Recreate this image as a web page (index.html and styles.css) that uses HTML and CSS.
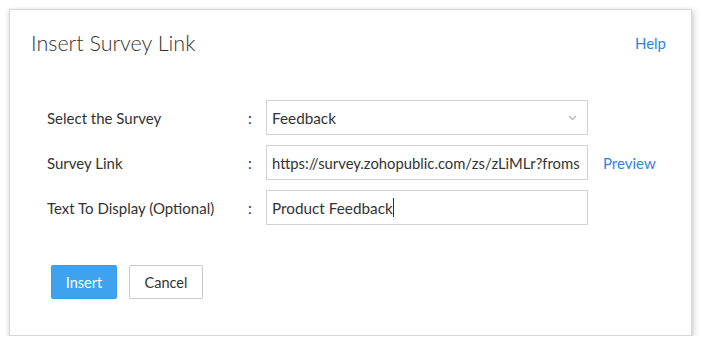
FILE: index.html
```html
<!DOCTYPE html>
<html>
<head>
    <title>Insert Survey Link</title>
    <link rel="stylesheet" href="styles.css">
</head>
<body>
    <div class="dialog">
        <div class="dialog-header">
            <h2>Insert Survey Link</h2>
            <a href="#" class="link">Help</a>
        </div>

        <div class="form">
            <label class="form-label">Select the Survey</label>
            <span class="colon">:</span>
            <div class="field select-field">
                <span>Feedback</span>
                <svg class="caret" width="9" height="6" viewBox="0 0 9 6">
                    <path d="M1 1 L4.5 4.5 L8 1" fill="none" stroke="#b0b0b0" stroke-width="1.2"/>
                </svg>
            </div>
            <span></span>

            <label class="form-label">Survey Link</label>
            <span class="colon">:</span>
            <div class="field url-field"><span>https://survey.zohopublic.com/zs/zLiMLr?froms</span></div>
            <a href="#" class="link preview">Preview</a>

            <label class="form-label">Text To Display (Optional)</label>
            <span class="colon">:</span>
            <div class="field"><span>Product Feedback</span><span class="cursor"></span></div>
            <span></span>
        </div>

        <div class="actions">
            <button class="btn btn-primary">Insert</button>
            <button class="btn btn-default">Cancel</button>
        </div>
    </div>
</body>
</html>
```

FILE: styles.css
```css
body {
    margin: 0;
    background-color: #ffffff;
    font-family: Lato, "Open Sans", sans-serif;
    color: #333333;
}

.dialog {
    margin: 9px 0 0 9px;
    width: 683px;
    height: 327px;
    box-sizing: border-box;
    background-color: #ffffff;
    border: 1px solid #d6d6d6;
    box-shadow: 1px 2px 6px rgba(0, 0, 0, 0.25);
}

.dialog-header {
    display: flex;
    justify-content: space-between;
    align-items: center;
    padding: 20px 25px 0 21px;
}

.dialog-header h2 {
    margin: 0;
    font-size: 21.5px;
    font-weight: 300;
    color: #333333;
}

.link {
    color: #2c86d9;
    text-decoration: none;
    font-size: 15px;
}

.form {
    display: grid;
    grid-template-columns: 201px 18px 322px auto;
    grid-auto-rows: 35px;
    row-gap: 10px;
    align-items: center;
    padding: 44px 0 0 37px;
}

.form-label {
    font-size: 15px;
}

.colon {
    font-size: 15px;
}

.field {
    height: 35px;
    box-sizing: border-box;
    border: 1px solid #d2d2d2;
    padding: 0 5px;
    display: flex;
    align-items: center;
    font-size: 15.3px;
    overflow: hidden;
    white-space: nowrap;
}

.url-field {
    font-size: 14.8px;
}

.select-field {
    justify-content: space-between;
    padding-right: 10px;
}

.cursor {
    display: inline-block;
    width: 1px;
    height: 19px;
    background-color: #333333;
}

.preview {
    padding-left: 15px;
}

.actions {
    display: flex;
    gap: 12px;
    padding: 40px 0 0 41px;
}

.btn {
    height: 34px;
    border-radius: 2px;
    font-family: Lato, "Open Sans", sans-serif;
    font-size: 14.5px;
    cursor: pointer;
}

.btn-primary {
    width: 66px;
    background-color: #3fa2ee;
    border: 1px solid #3a9ce8;
    color: #ffffff;
}

.btn-default {
    width: 74px;
    background-color: #ffffff;
    border: 1px solid #c8c8c8;
    color: #333333;
}
```
